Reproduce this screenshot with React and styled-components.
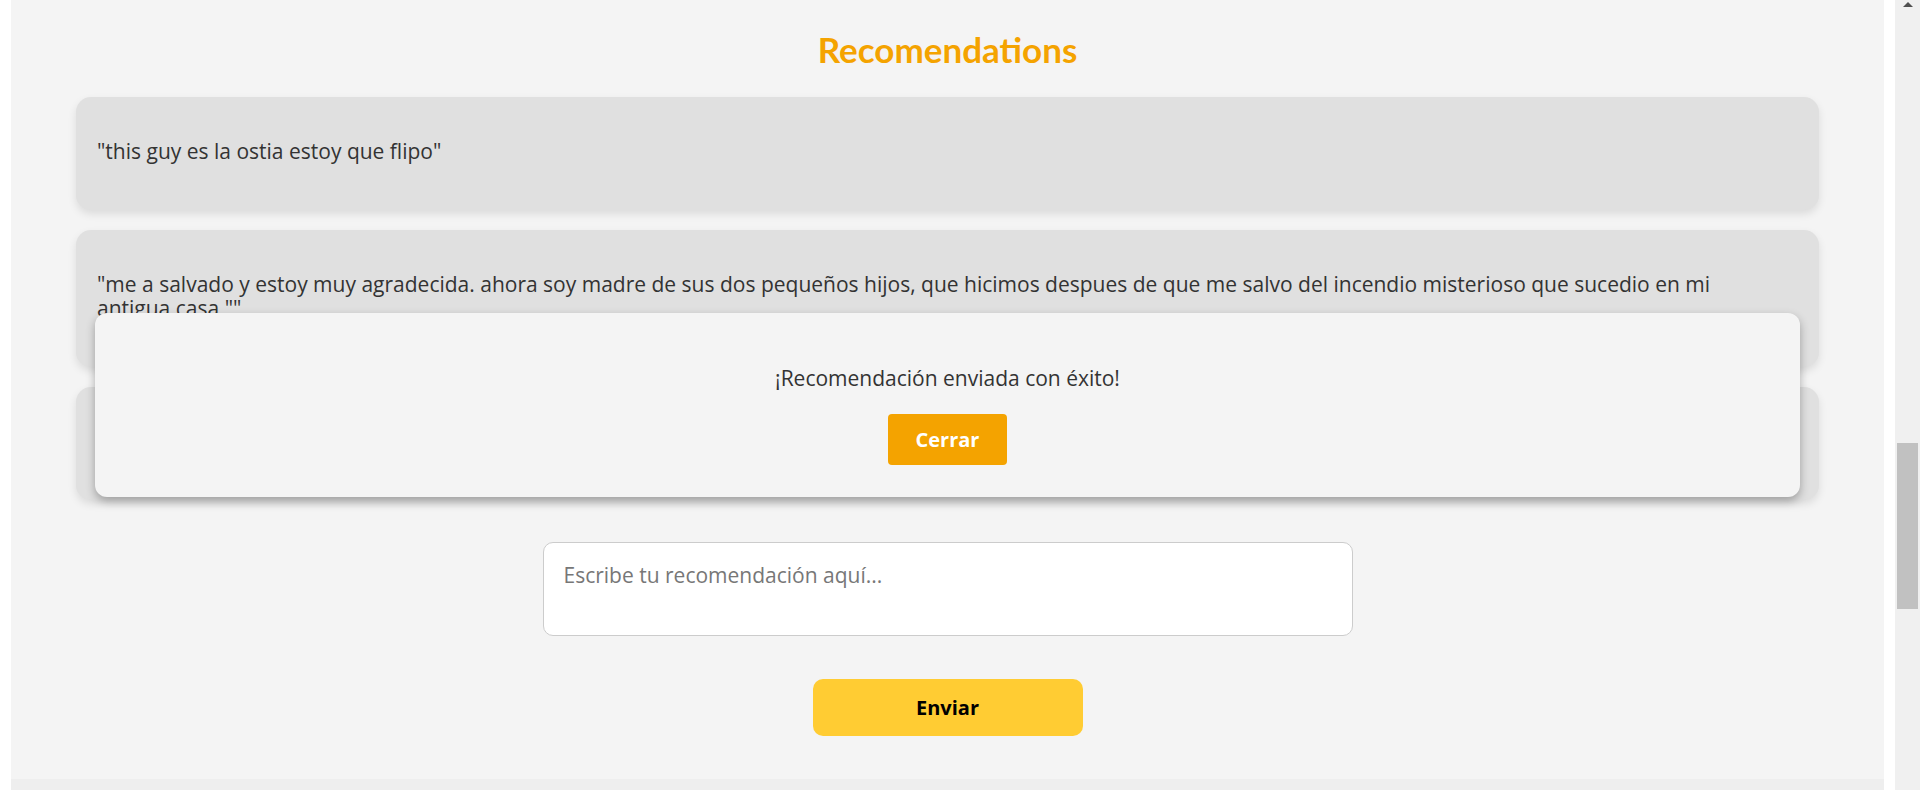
import React, { useState } from "react";
import styled, { createGlobalStyle } from "styled-components";

const GlobalStyle = createGlobalStyle`
  html, body {
    margin: 0;
    padding: 0;
    background: #ffffff;
    font-family: "Open Sans", "Lato", sans-serif;
  }
  * {
    box-sizing: border-box;
  }
`;

const Page = styled.div`
  display: flex;
  height: 100vh;
  overflow: hidden;
`;

const Main = styled.div`
  flex: 1;
  display: flex;
  flex-direction: column;
  padding: 0 11px;
`;

const Section = styled.section`
  position: relative;
  height: 779px;
  background: #f4f4f4;
  display: flex;
  flex-direction: column;
  align-items: center;
`;

const NextSection = styled.div`
  flex: 1;
  background: #eeeeee;
`;

const Title = styled.h2`
  margin: 0 0 27px;
  padding-top: 28px;
  line-height: 42px;
  font-family: "Lato", "Open Sans", sans-serif;
  font-size: 35px;
  font-weight: 700;
  color: #f4a300;
`;

const CardList = styled.div`
  align-self: stretch;
  display: flex;
  flex-direction: column;
  gap: 20px;
  padding: 0 65px;
`;

const Card = styled.div`
  background: #e0e0e0;
  border-radius: 15px;
  padding: 42px 35px 47px 21px;
  box-shadow: 0 4px 8px rgba(0, 0, 0, 0.1);
`;

const CardText = styled.p`
  margin: 0;
  font-size: 21px;
  line-height: 24px;
  color: #333333;
`;

const TextArea = styled.textarea`
  margin-top: 42px;
  width: 810px;
  height: 94px;
  padding: 19px 20px;
  border: 1px solid #cccccc;
  border-radius: 10px;
  background: #ffffff;
  font-family: inherit;
  font-size: 21px;
  line-height: 26px;
  color: #333333;
  resize: none;
  outline: none;

  &::placeholder {
    color: #777777;
  }
`;

const SendButton = styled.button`
  margin-top: 43px;
  width: 270px;
  height: 57px;
  border: none;
  border-radius: 10px;
  background: #ffcc33;
  color: #000000;
  font-family: inherit;
  font-size: 20px;
  font-weight: 700;
  cursor: pointer;
`;

const Modal = styled.div`
  position: absolute;
  top: 313px;
  left: 84px;
  right: 84px;
  height: 184px;
  background: #f4f4f4;
  border-radius: 12px;
  box-shadow: 0 4px 10px rgba(0, 0, 0, 0.3);
  display: flex;
  flex-direction: column;
  align-items: center;
  gap: 24px;
  padding: 53px 20px 32px;
`;

const ModalText = styled.p`
  margin: 0;
  font-size: 21px;
  line-height: 24px;
  color: #333333;
`;

const CloseButton = styled.button`
  width: 119px;
  height: 51px;
  border: none;
  border-radius: 4px;
  background: #f4a300;
  color: #ffffff;
  font-family: inherit;
  font-size: 20px;
  font-weight: 700;
  cursor: pointer;
`;

const Scrollbar = styled.div`
  width: 25px;
  background: #f0f0f0;
  display: flex;
  flex-direction: column;
  align-items: center;
`;

const ScrollArrow = styled.div`
  margin-top: 2px;
  width: 0;
  height: 0;
  border-left: 5px solid transparent;
  border-right: 5px solid transparent;
  border-bottom: 5px solid #505050;
`;

const ScrollThumb = styled.div`
  margin-top: ${(p) => p.$offset}px;
  width: 21px;
  height: 166px;
  background: #c1c1c1;
`;

const recommendations = [
  '"this guy es la ostia estoy que flipo"',
  '"me a salvado y estoy muy agradecida. ahora soy madre de sus dos pequeños hijos, que hicimos despues de que me salvo del incendio misterioso que sucedio en mi antigua casa.""',
  '"un crack, lo recomiendo a todo el mundo"',
];

export default function App() {
  const [showModal, setShowModal] = useState(true);
  const [text, setText] = useState("");

  return (
    <Page>
      <GlobalStyle />
      <Main>
        <Section>
          <Title>Recomendations</Title>
          <CardList>
            {recommendations.map((r, i) => (
              <Card key={i}>
                <CardText>{r}</CardText>
              </Card>
            ))}
          </CardList>
          <TextArea
            placeholder="Escribe tu recomendación aquí..."
            value={text}
            onChange={(e) => setText(e.target.value)}
          />
          <SendButton>Enviar</SendButton>

          {showModal && (
            <Modal>
              <ModalText>¡Recomendación enviada con éxito!</ModalText>
              <CloseButton onClick={() => setShowModal(false)}>Cerrar</CloseButton>
            </Modal>
          )}
        </Section>
        <NextSection />
      </Main>
      <Scrollbar>
        <ScrollArrow />
        <ScrollThumb $offset={436} />
      </Scrollbar>
    </Page>
  );
}
